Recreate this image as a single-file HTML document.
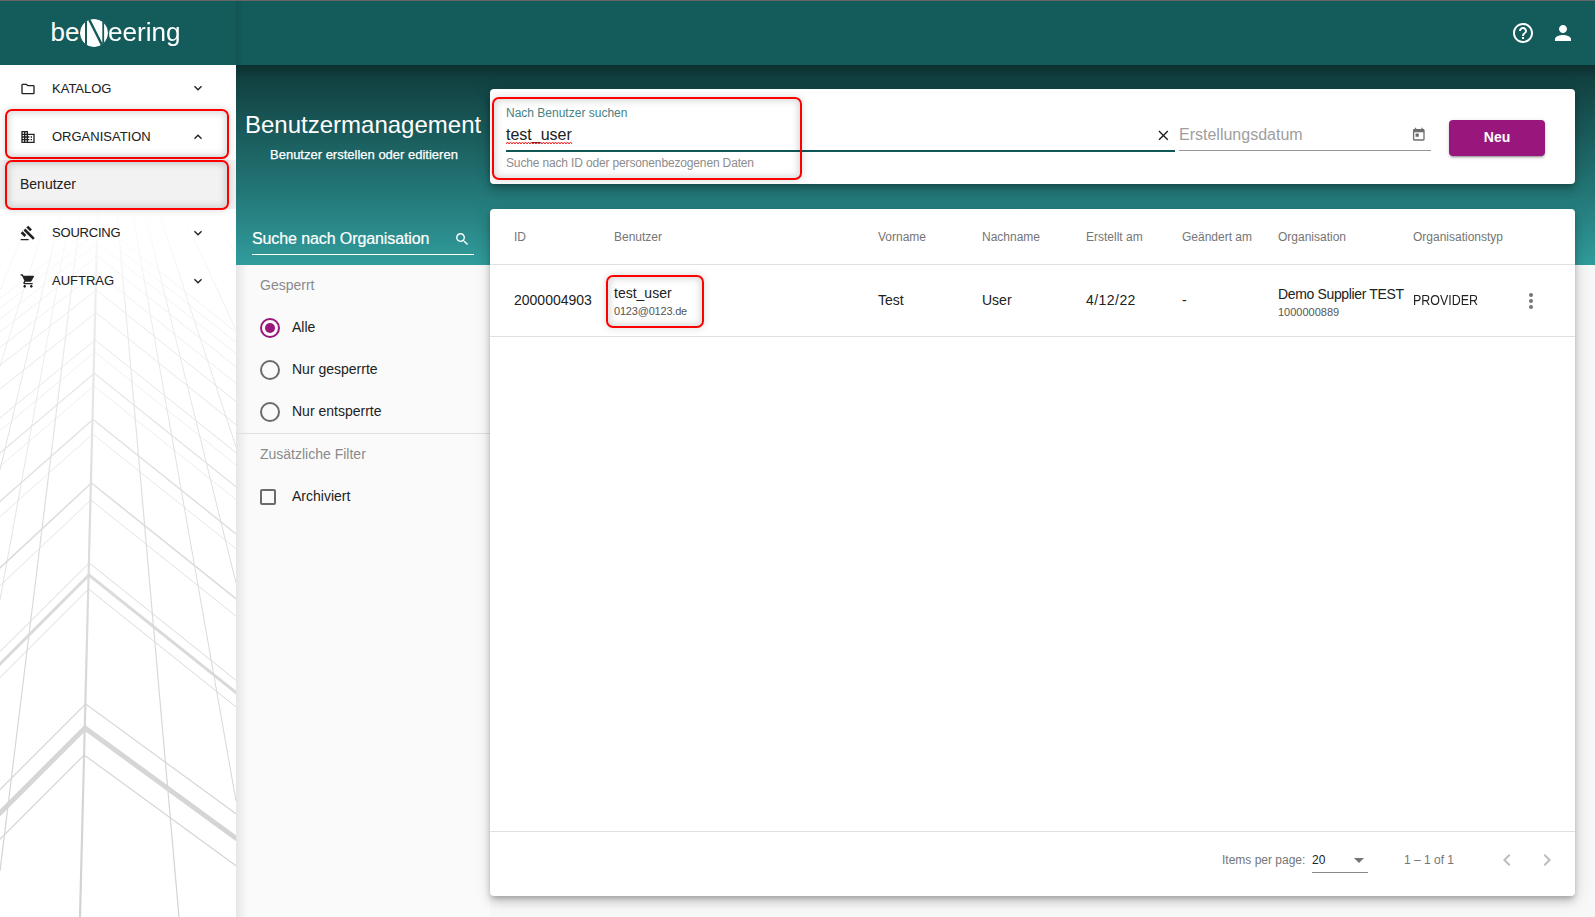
<!DOCTYPE html>
<html><head><meta charset="utf-8">
<style>
*{box-sizing:border-box;margin:0;padding:0}
html,body{width:1595px;height:917px;overflow:hidden;background:#f7f7f7;font-family:"Liberation Sans",sans-serif;color:rgba(0,0,0,.87)}
.a{position:absolute}
.t{position:absolute;white-space:nowrap}
svg{position:absolute;overflow:visible}
#topline{left:0;top:0;width:1595px;height:1px;background:#666;z-index:40}
#side{left:0;top:0;width:236px;height:917px;background:#fff;overflow:hidden;z-index:5}
#sidehead{left:0;top:0;width:236px;height:65px;background:#145c5c}
#mainhead{left:236px;top:0;width:1359px;height:65px;background:#145c5c;z-index:6}
#band{left:236px;top:65px;width:1359px;height:200px;background:linear-gradient(180deg,#0f3a3a 0%,#164e4e 20%,#247878 65%,#319c9c 100%)}
#filter{left:236px;top:265px;width:254px;height:652px;background:#fafafa}
.mt{font-size:13px;line-height:13px;color:#212121;left:52px;-webkit-text-stroke:.05px #212121}
.card{position:absolute;background:#fff;border-radius:4px;box-shadow:0 3px 5px -1px rgba(0,0,0,.2),0 6px 10px 0 rgba(0,0,0,.14),0 1px 18px 0 rgba(0,0,0,.12)}
.red{position:absolute;border:2px solid #f00;border-radius:7px;box-shadow:inset 0 0 7px 2px rgba(0,0,0,.15),0 0 7px 1px rgba(0,0,0,.12);z-index:30}
.th{position:absolute;top:231px;font-size:12px;line-height:12px;color:#757575;white-space:nowrap}
.td{position:absolute;font-size:14px;line-height:14px;color:#212121;white-space:nowrap}
.sm{position:absolute;font-size:11px;line-height:11px;color:#555;white-space:nowrap}
.ft{position:absolute;top:853.9px;font-size:12px;line-height:12px;color:#757575;white-space:nowrap}
.lbl{position:absolute;font-size:14px;line-height:14px;color:#212121;left:292px;white-space:nowrap}
.radio{position:absolute;left:260px;width:20px;height:20px;border:2px solid #6b6b6b;border-radius:50%}
</style></head><body>
<div id="topline" class="a"></div>

<!-- SIDEBAR -->
<div id="side" class="a">
  <svg width="236" height="917" style="left:0;top:0" viewBox="0 0 236 917">
    <defs>
      <linearGradient id="fade" x1="0" y1="0" x2="0" y2="917" gradientUnits="userSpaceOnUse">
        <stop offset="0" stop-color="#fff" stop-opacity="0"/>
        <stop offset="0.22" stop-color="#fff" stop-opacity="0"/>
        <stop offset="0.33" stop-color="#fff" stop-opacity="0.4"/>
        <stop offset="0.55" stop-color="#fff" stop-opacity="0.75"/>
        <stop offset="1" stop-color="#fff" stop-opacity="1"/>
      </linearGradient>
      <mask id="m"><rect x="0" y="0" width="236" height="917" fill="url(#fade)"/></mask>
    </defs>
    <g stroke="#d2d2d2" fill="none" mask="url(#m)">
<line x1="102" y1="40" x2="80" y2="917" stroke-width="2.2"/>
<line x1="102" y1="40" x2="179" y2="917" stroke-width="1.2"/>
<line x1="102" y1="40" x2="236" y2="801" stroke-width="1"/>
<line x1="102" y1="40" x2="236" y2="583" stroke-width="1"/>
<line x1="102" y1="40" x2="236" y2="447" stroke-width="1"/>
<line x1="102" y1="40" x2="236" y2="330" stroke-width="0.8"/>
<line x1="102" y1="40" x2="236" y2="255" stroke-width="0.8"/>
<line x1="102" y1="40" x2="0" y2="871" stroke-width="1.2"/>
<line x1="102" y1="40" x2="0" y2="600" stroke-width="0.8"/>
<line x1="102" y1="40" x2="0" y2="470" stroke-width="1"/>
<line x1="102" y1="40" x2="0" y2="366" stroke-width="0.8"/>
<line x1="102" y1="40" x2="0" y2="290" stroke-width="0.8"/>
<line x1="102" y1="40" x2="0" y2="225" stroke-width="0.7"/>
<polyline points="-5,302.5 98.2,222.0 240,335.4" stroke-width="0.7"/>
<polyline points="-5,312.3 98.0,232.0 240,345.6" stroke-width="0.7"/>
<polyline points="-5,323.1 97.7,243.0 240,356.9" stroke-width="0.7"/>
<polyline points="-5,335.8 97.3,256.0 240,370.1" stroke-width="0.8"/>
<polyline points="-5,351.5 96.9,272.0 240,386.5" stroke-width="0.8"/>
<polyline points="-5,369.1 96.4,290.0 240,404.8" stroke-width="1"/>
<polyline points="-5,393.0 95.9,312.6 240,427.9" stroke-width="1"/>
<polyline points="-5,422.0 95.1,340.0 240,455.9" stroke-width="1"/>
<polyline points="-5,434.7 94.8,352.0 240,468.1" stroke-width="0.6"/>
<polyline points="-5,457.2 94.3,373.4 240,490.0" stroke-width="1.2"/>
<polyline points="-5,470.5 93.9,386.0 240,502.9" stroke-width="0.6"/>
<polyline points="-5,505.8 93.0,419.5 240,537.1" stroke-width="1.4"/>
<polyline points="-5,521.1 92.7,434.0 240,551.9" stroke-width="0.7"/>
<polyline points="-5,572.6 91.4,483.0 240,601.9" stroke-width="1.6"/>
<polyline points="-5,590.4 90.9,500.0 240,619.3" stroke-width="0.8"/>
<polyline points="-5,656.5 89.3,563.0 240,683.6" stroke-width="1"/>
<polyline points="-5,669.0 89.0,575.0 240,695.8" stroke-width="3"/>
<polyline points="-5,682.6 88.6,589.0 240,710.1" stroke-width="1"/>
<polyline points="-5,794.6 85.6,704.0 240,816.7" stroke-width="1.2"/>
<polyline points="-5,818.0 85.0,728.0 240,841.2" stroke-width="5"/>
<polyline points="-5,844.2 84.2,755.0 240,868.7" stroke-width="1.2"/>
    </g>
  </svg>
  <div id="sidehead" class="a"></div>
  <!-- logo -->
  <div class="t" style="left:50.5px;top:18.9px;font-size:26px;line-height:26px;color:#fff;transform:scaleX(1);transform-origin:0 0">be</div>
  <svg width="28" height="28" style="left:80px;top:19px" viewBox="0 0 28 28">
    <defs><clipPath id="cc"><circle cx="14" cy="14" r="14"/></clipPath></defs>
    <g clip-path="url(#cc)">
      <circle cx="14" cy="14" r="14" fill="#fff"/>
      <rect x="5" y="-2" width="2" height="32" fill="#145c5c"/>
      <rect x="22.3" y="-2" width="1.8" height="32" fill="#145c5c"/>
      <line x1="8.9" y1="0" x2="23" y2="28" stroke="#145c5c" stroke-width="2.4"/>
    </g>
  </svg>
  <div class="t" style="left:107.5px;top:18.9px;font-size:26px;line-height:26px;color:#fff;transform:scaleX(1.005);transform-origin:0 0">eering</div>

  <!-- menu -->
  <div class="a" style="left:0;top:160px;width:236px;height:49px;background:#f2f2f2"></div>
  <svg width="16" height="16" style="left:20px;top:81px" viewBox="0 0 24 24"><path fill="#212121" d="M9.17 6l2 2H20v10H4V6h5.17M10 4H4c-1.1 0-1.99.9-1.99 2L2 18c0 1.1.9 2 2 2h16c1.1 0 2-.9 2-2V8c0-1.1-.9-2-2-2h-8l-2-2z"/></svg>
  <div class="t mt" style="top:82px">KATALOG</div>
  <svg width="16" height="16" style="left:190px;top:80px" viewBox="0 0 24 24"><path fill="#212121" d="M16.59 8.59L12 13.17 7.41 8.59 6 10l6 6 6-6z"/></svg>

  <svg width="16" height="16" style="left:20px;top:129px" viewBox="0 0 24 24"><path fill="#212121" d="M12 7V3H2v18h20V7H12zM6 19H4v-2h2v2zm0-4H4v-2h2v2zm0-4H4V9h2v2zm0-4H4V5h2v2zm4 12H8v-2h2v2zm0-4H8v-2h2v2zm0-4H8V9h2v2zm0-4H8V5h2v2zm10 12h-8v-2h2v-2h-2v-2h2v-2h-2V9h8v10zm-2-8h-2v2h2v-2zm0 4h-2v2h2v-2z"/></svg>
  <div class="t mt" style="top:130px">ORGANISATION</div>
  <svg width="16" height="16" style="left:190px;top:129px" viewBox="0 0 24 24"><path fill="#212121" d="M12 8l-6 6 1.41 1.41L12 10.83l4.59 4.58L18 14z"/></svg>

  <div class="t" style="left:20px;top:177px;font-size:14px;line-height:14px;color:#212121">Benutzer</div>

  <svg width="16" height="16" style="left:20px;top:225px" viewBox="0 0 24 24"><path fill="#212121" d="M1 21h12v2H1v-2zM5.245 8.07l2.83-2.827 14.14 14.142-2.828 2.828L5.245 8.07zM12.317 1l5.657 5.656-2.83 2.83-5.654-5.66L12.317 1zM3.825 9.485l5.657 5.657-2.828 2.828-5.657-5.657 2.828-2.828z"/></svg>
  <div class="t mt" style="top:226px;letter-spacing:-.2px">SOURCING</div>
  <svg width="16" height="16" style="left:190px;top:225px" viewBox="0 0 24 24"><path fill="#212121" d="M16.59 8.59L12 13.17 7.41 8.59 6 10l6 6 6-6z"/></svg>

  <svg width="16" height="16" style="left:20px;top:273px" viewBox="0 0 24 24"><path fill="#212121" d="M7 18c-1.1 0-1.99.9-1.99 2S5.9 22 7 22s2-.9 2-2-.9-2-2-2zM1 2v2h2l3.6 7.59-1.350 2.45c-.16.28-.25.61-.25.96 0 1.1.9 2 2 2h12v-2H7.42c-.14 0-.25-.11-.25-.25l.03-.12.9-1.63h7.45c.75 0 1.41-.41 1.75-1.03l3.58-6.49c.08-.14.12-.31.12-.48 0-.55-.45-1-1-1H5.21l-.94-2H1zm16 16c-1.1 0-1.99.9-1.990 2s.89 2 1.99 2 2-.9 2-2-.9-2-2-2z"/></svg>
  <div class="t mt" style="top:274px">AUFTRAG</div>
  <svg width="16" height="16" style="left:190px;top:273px" viewBox="0 0 24 24"><path fill="#212121" d="M16.59 8.59L12 13.17 7.41 8.59 6 10l6 6 6-6z"/></svg>
  
</div>

<!-- HEADER -->
<div id="mainhead" class="a">
  <svg width="24" height="24" style="left:1275px;top:21px" viewBox="0 0 24 24"><path fill="#fff" d="M11 18h2v-2h-2v2zm1-16C6.48 2 2 6.48 2 12s4.48 10 10 10 10-4.48 10-10S17.520 2 12 2zm0 18c-4.41 0-8-3.59-8-8s3.59-8 8-8 8 3.59 8 8-3.59 8-8 8zm0-14c-2.21 0-4 1.79-4 4h2c0-1.1.9-2 2-2s2 .9 2 2c0 2-3 1.75-3 5h2c0-2.25 3-2.5 3-5 0-2.21-1.79-4-4-4z"/></svg>
  <svg width="24" height="24" style="left:1314.5px;top:21px" viewBox="0 0 24 24"><path fill="#fff" d="M12 12c2.21 0 4-1.79 4-4s-1.79-4-4-4-4 1.79-4 4 1.79 4 4 4zm0 2c-2.67 0-8 1.34-8 4v2h16v-2c0-2.66-5.33-4-8-4z"/></svg>
</div>
<div id="band" class="a"></div>
<div class="a" style="left:236px;top:0;width:10px;height:65px;background:linear-gradient(90deg,rgba(0,0,0,.08),rgba(0,0,0,0));z-index:7"></div>
<div class="a" style="left:236px;top:65px;width:1359px;height:14px;background:linear-gradient(180deg,rgba(0,0,0,.18),rgba(0,0,0,0))"></div>
<div id="filter" class="a"></div>
<div class="a" style="left:236px;top:265px;width:12px;height:652px;background:linear-gradient(90deg,rgba(0,0,0,.08),rgba(0,0,0,0))"></div>

<!-- TITLE -->
<div class="t" style="left:245px;top:113px;color:#fff;font-size:24px;line-height:24px">Benutzermanagement</div>
<div class="t" style="left:270px;top:148px;color:#fff;font-size:13px;line-height:13px;-webkit-text-stroke:.25px #fff">Benutzer erstellen oder editieren</div>

<!-- ORG SEARCH -->
<div class="t" style="left:252px;top:230.5px;color:#fff;font-size:16px;line-height:16px;letter-spacing:-.1px;-webkit-text-stroke:.2px #fff">Suche nach Organisation</div>
<svg width="16.5" height="16.5" style="left:454px;top:231.4px" viewBox="0 0 24 24"><path fill="#fff" d="M15.5 14h-.79l-.28-.27C15.41 12.59 16 11.11 16 9.5 16 5.91 13.09 3 9.5 3S3 5.910 3 9.5 5.91 16 9.5 16c1.61 0 3.09-.59 4.23-1.57l.27.28v.79l5 4.99L20.49 19l-4.99-5zm-6 0C7.01 14 5 11.99 5 9.5S7.01 5 9.5 5 14 7.01 14 9.5 11.99 14 9.5 14z"/></svg>
<div class="a" style="left:252px;top:254px;width:222px;height:1.2px;background:#fff"></div>

<!-- FILTERS -->
<div class="t" style="left:260px;top:278.4px;font-size:14px;line-height:14px;color:#8a8a8a">Gesperrt</div>
<div class="radio" style="top:318px;border-color:#99177c"><div class="a" style="left:3px;top:3px;width:10px;height:10px;border-radius:50%;background:#99177c"></div></div>
<div class="lbl" style="top:320px">Alle</div>
<div class="radio" style="top:360px"></div>
<div class="lbl" style="top:362.4px">Nur gesperrte</div>
<div class="radio" style="top:402px"></div>
<div class="lbl" style="top:404.4px">Nur entsperrte</div>
<div class="a" style="left:236px;top:433px;width:254px;height:1px;background:#e0e0e0"></div>
<div class="t" style="left:260px;top:447.4px;font-size:14px;line-height:14px;color:#8a8a8a">Zusätzliche Filter</div>
<div class="a" style="left:260px;top:489px;width:16px;height:16px;border:2px solid #6b6b6b;border-radius:2px"></div>
<div class="lbl" style="top:489.4px">Archiviert</div>

<!-- SEARCH CARD -->
<div class="card" style="left:490px;top:89px;width:1085px;height:95px"></div>
<div class="t" style="left:506px;top:106.5px;font-size:12px;line-height:12px;color:#468282">Nach Benutzer suchen</div>
<div class="t" style="left:506px;top:126.5px;font-size:16px;line-height:16px;color:#212121">test_user</div>
<svg width="66" height="4" style="left:506px;top:141px" viewBox="0 0 66 4"><path d="M0 3 L1.5 1 L3 3 L4.5 1 L6 3 L7.5 1 L9 3 L10.5 1 L12 3 L13.5 1 L15 3 L16.5 1 L18 3 L19.5 1 L21 3 L22.5 1 L24 3 L25.5 1 L27 3 L28.5 1 L30 3 L31.5 1 L33 3 L34.5 1 L36 3 L37.5 1 L39 3 L40.5 1 L42 3 L43.5 1 L45 3 L46.5 1 L48 3 L49.5 1 L51 3 L52.5 1 L54 3 L55.5 1 L57 3 L58.5 1 L60 3 L61.5 1 L63 3 L64.5 1 L66 3" stroke="#e22" stroke-width="1" fill="none"/></svg>
<div class="a" style="left:506px;top:150px;width:669px;height:2px;background:#0f5757"></div>
<div class="t" style="left:506px;top:156.5px;font-size:12px;line-height:12px;color:#8c8c8c;letter-spacing:-.15px">Suche nach ID oder personenbezogenen Daten</div>
<svg width="16.8" height="16.8" style="left:1154.6px;top:126.6px" viewBox="0 0 24 24"><path fill="#212121" d="M19 6.41L17.59 5 12 10.59 6.41 5 5 6.41 10.59 12 5 17.59 6.41 19 12 13.41 17.59 19 19 17.59 13.41 12z"/></svg>
<div class="t" style="left:1179px;top:126.8px;font-size:16px;line-height:16px;color:#9e9e9e">Erstellungsdatum</div>
<div class="a" style="left:1179px;top:150px;width:252px;height:1px;background:#949494"></div>
<svg width="15.6" height="15.6" style="left:1411px;top:127px" viewBox="0 0 24 24"><path fill="#6e6e6e" d="M19 3h-1V1h-2v2H8V1H6v2H5c-1.11 0-1.99.9-1.99 2L3 19c0 1.1.89 2 2 2h14c1.1 0 2-.9 2-2V5c0-1.1-.9-2-2-2zm0 16H5V8h14v11zM7 10h5v5H7z"/></svg>
<div class="a" style="left:1449px;top:120px;width:96px;height:36px;background:#99177c;border-radius:4px;box-shadow:0 3px 1px -2px rgba(0,0,0,.2),0 2px 2px 0 rgba(0,0,0,.14),0 1px 5px 0 rgba(0,0,0,.12)"></div>
<div class="t" style="left:1449px;width:96px;text-align:center;top:130.3px;font-size:14px;line-height:14px;color:#fff;font-weight:bold">Neu</div>

<!-- TABLE CARD -->
<div class="card" style="left:490px;top:209px;width:1085px;height:687px"></div>
<div class="th" style="left:514px">ID</div>
<div class="th" style="left:614px">Benutzer</div>
<div class="th" style="left:878px">Vorname</div>
<div class="th" style="left:982px">Nachname</div>
<div class="th" style="left:1086px">Erstellt am</div>
<div class="th" style="left:1182px">Geändert am</div>
<div class="th" style="left:1278px">Organisation</div>
<div class="th" style="left:1413px">Organisationstyp</div>
<div class="a" style="left:490px;top:264px;width:1085px;height:1px;background:#e0e0e0"></div>

<div class="td" style="left:514px;top:293.2px">2000004903</div>
<div class="td" style="left:614px;top:286.3px">test_user</div>
<div class="sm" style="left:614px;top:306px;letter-spacing:-.2px">0123@0123.de</div>
<div class="td" style="left:878px;top:293.2px">Test</div>
<div class="td" style="left:982px;top:293.2px">User</div>
<div class="td" style="left:1086px;top:293.2px;letter-spacing:.45px">4/12/22</div>
<div class="td" style="left:1182px;top:293.2px">-</div>
<div class="td" style="left:1278px;top:286.8px;letter-spacing:-.35px">Demo Supplier TEST</div>
<div class="sm" style="left:1278px;top:306.7px">1000000889</div>
<div class="td" style="left:1413px;top:293.2px;transform:scaleX(.89);transform-origin:0 0">PROVIDER</div>
<svg width="6" height="18" style="left:1528px;top:292px" viewBox="0 0 6 18"><circle cx="3" cy="3" r="2" fill="#757575"/><circle cx="3" cy="9" r="2" fill="#757575"/><circle cx="3" cy="15" r="2" fill="#757575"/></svg>
<div class="a" style="left:490px;top:336px;width:1085px;height:1px;background:#e0e0e0"></div>

<div class="a" style="left:490px;top:831px;width:1085px;height:1px;background:#e0e0e0"></div>
<div class="ft" style="left:1222px">Items per page:</div>
<div class="ft" style="left:1312px;color:#212121">20</div>
<svg width="10" height="5" style="left:1354px;top:857.5px" viewBox="0 0 10 5"><path d="M0 0h10L5 5z" fill="#757575"/></svg>
<div class="a" style="left:1312px;top:872px;width:56px;height:1px;background:#8a8a8a"></div>
<div class="ft" style="left:1404px">1 – 1 of 1</div>
<svg width="24" height="24" style="left:1495px;top:848px" viewBox="0 0 24 24"><path fill="#bdbdbd" d="M15.41 7.41L14 6l-6 6 6 6 1.41-1.41L10.83 12z"/></svg>
<svg width="24" height="24" style="left:1535px;top:848px" viewBox="0 0 24 24"><path fill="#bdbdbd" d="M10 6L8.59 7.41 13.17 12l-4.58 4.59L10 18l6-6z"/></svg>

<!-- RED ANNOTATIONS -->
<div class="red" style="left:5px;top:109px;width:224px;height:50px"></div>
<div class="red" style="left:5px;top:160px;width:224px;height:50px"></div>
<div class="red" style="left:492px;top:97px;width:310px;height:83px"></div>
<div class="red" style="left:606px;top:275px;width:98px;height:53px"></div>
</body></html>
